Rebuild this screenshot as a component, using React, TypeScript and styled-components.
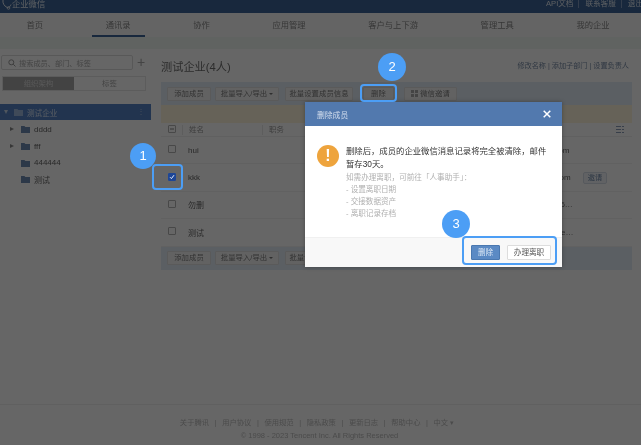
import React from "react";
import styled, { createGlobalStyle } from "styled-components";

const Global = createGlobalStyle`
  html, body { margin: 0; padding: 0; background: #fff; }
  body { font-family: "Liberation Sans", "Noto Sans CJK SC", sans-serif; }
  * { box-sizing: border-box; }
`;

const Page = styled.div`
  position: relative; width: 641px; height: 445px; overflow: hidden;
  display: flex; flex-direction: column; background: #fff; filter: blur(0.5px);
`;
const Top = styled.header`
  height: 13px; flex: none; background: #3e6598; display: flex; align-items: flex-start;
  font-size: 7.6px; line-height: 8px; color: #fff; padding-left: 2px; overflow: hidden;
`;
const Brand = styled.span`font-size: 8.3px; color: #e6edf5;`;
const TopLinks = styled.nav`
  margin-left: auto; display: flex; gap: 5px; margin-right: -2px; color: #dfe7f0;
  span + span { border-left: 1px solid #7f9abd; padding-left: 6px; }
`;
const Nav = styled.nav`
  height: 24px; flex: none; display: flex; gap: 34.6px; padding-left: 12.5px;
  background: #fbfbfb;
`;
const Tab = styled.a<{ $on?: boolean }>`
  padding: 0 14px; font-size: 8.3px; line-height: 24px; height: 24px; color: #888;
  border-bottom: 2px solid ${(p) => (p.$on ? "#3e6598" : "transparent")};
`;
const Strip = styled.div`height: 12px; flex: none; background: #eff8f3;`;
const Body = styled.div`flex: 1; display: flex; min-height: 0; background: #fff;`;
const Side = styled.aside`width: 152px; flex: none; padding-top: 6px;`;
const SearchRow = styled.div`display: flex; align-items: center; padding-left: 1px;`;
const Search = styled.div`
  width: 132px; height: 15px; border: 1px solid #ddd; border-radius: 2px; display: flex;
  align-items: center; gap: 3px; padding-left: 6px; font-size: 7.2px; color: #aaa;
`;
const Plus = styled.span`margin-left: 4px; font-size: 14px; line-height: 13px; color: #aaa;`;
const Switch = styled.div`
  margin: 6px 0 0 2px; width: 144px; height: 15px; border: 1px solid #e6e6e6; display: flex;
  font-size: 7.4px; line-height: 13px; text-align: center; color: #aaa;
`;
const SwitchItem = styled.span<{ $on?: boolean }>`
  flex: 1; background: ${(p) => (p.$on ? "#a9a9a9" : "#fff")}; color: ${(p) => (p.$on ? "#ddd" : "#aaa")};
`;
const Tree = styled.div`margin-top: 13px;`;
const Selected = styled.div`
  height: 16px; background: #5583c6; display: flex; align-items: center; padding: 0 6px 0 4px;
  gap: 4px; color: #dbe6f5; font-size: 7.6px; margin-bottom: 1px; width: 151px;
`;
const Node = styled.div`
  height: 16.7px; display: flex; align-items: center; padding-left: 10px; gap: 4px;
  font-size: 8px; color: #666;
`;
const Caret = styled.span<{ $hidden?: boolean; $down?: boolean }>`
  width: 0; height: 0; flex: none; visibility: ${(p) => (p.$hidden ? "hidden" : "visible")};
  border-style: solid;
  ${(p) => p.$down
    ? "border-width: 4px 2.5px 0 2.5px; border-color: #c5d6ec transparent transparent transparent; margin-right: 2px;"
    : "border-width: 2.5px 0 2.5px 4px; border-color: transparent transparent transparent #8a8a8a; margin: 0 3px 0 0;"}
`;
const Dots = styled.span`margin-left: auto; font-size: 8px; color: #a8bedc; line-height: 8px;`;
const Main = styled.main`width: 471px; margin-left: 9px; flex: none; display: flex; flex-direction: column;`;
const Head = styled.div`height: 33px; display: flex; align-items: flex-start; justify-content: space-between; padding-top: 11px;`;
const Title = styled.h1`margin: 0; font-size: 11.2px; line-height: 14px; font-weight: 400; color: #6f6f6f;`;
const HeadLinks = styled.div`font-size: 7.15px; line-height: 10px; color: #7b8ea8; margin: 1px 3px 0 0;`;
const Bar = styled.div`
  height: 23px; background: #e4eef7; display: flex; align-items: center; gap: 4px; padding-left: 6px; flex: none;
`;
const Btn = styled.button<{ $w: number; $mr?: number }>`
  width: ${(p) => p.$w}px; margin-right: ${(p) => p.$mr ?? 0}px; height: 14px; padding: 0; background: #f6f6f6;
  border: 1px solid #e2e2e2; border-radius: 1px; font: 7.4px/12px "Liberation Sans", "Noto Sans CJK SC", sans-serif;
  color: #7d7d7d; display: flex; align-items: center; justify-content: center; gap: 2px;
`;
const Arrow = styled.i`
  width: 0; height: 0; border-style: solid; border-width: 2.5px 2px 0 2px;
  border-color: #777 transparent transparent transparent;
`;
const Notice = styled.div`height: 18px; flex: none; background: #fff4dc;`;
const HeaderRow = styled.div`
  height: 14px; display: grid; grid-template-columns: 21px 80px 242px 70px 1fr; align-items: center;
  font-size: 7.4px; color: #999; border-bottom: 1px solid #f0f0f0; flex: none;
`;
const HeadCell = styled.span<{ $line?: boolean }>`
  padding-left: 6px; line-height: 10px; border-left: ${(p) => (p.$line ? "1px solid #e8e8e8" : "none")};
`;
const Row = styled.div`
  height: 27.4px; display: grid; grid-template-columns: 21px 80px 239px 75px 1fr; align-items: center;
  font-size: 8px; color: #666; border-bottom: 1px solid #f3f3f3; flex: none;
`;
const Cell = styled.span`padding-left: 6px; overflow: hidden; white-space: nowrap; text-overflow: ellipsis;`;
const Box = styled.span<{ $on?: boolean }>`
  width: 8px; height: 8px; margin-left: 7px; border-radius: 1px; display: flex; align-items: center; justify-content: center;
  border: 1px solid ${(p) => (p.$on ? "#1e4696" : "#b5b5b5")}; background: ${(p) => (p.$on ? "#1e4696" : "#fff")};
  position: relative; top: -1px; z-index: ${(p) => (p.$on ? 1 : "auto")};
`;
const Invite = styled.button`
  width: 24px; height: 12px; padding: 0; margin-left: 7px; background: #f3f6fa; border: 1px solid #d8dfe8; border-radius: 2px;
  font: 7.2px/10px "Liberation Sans", "Noto Sans CJK SC", sans-serif; color: #6e87a8; display: block;
`;
const ColIcon = styled.span`display: flex; justify-content: flex-end; padding-right: 8px;`;
const Foot = styled.footer`
  height: 41px; flex: none; border-top: 1px solid #f0f0f0; text-align: center; padding-top: 11px;
  font-size: 7.3px; line-height: 13px; color: #bbb; background: #fff;
`;
const FootLinks = styled.div`display: flex; justify-content: center; gap: 5.6px; padding-right: 7px;`;
const Copy = styled.div`font-size: 7.5px; padding-right: 2px;`;
const Backdrop = styled.div`position: absolute; inset: 0; background: rgba(0,0,0,.6);`;
const Modal = styled.section`
  position: absolute; left: 305px; top: 102px; width: 257px; height: 165px; background: #fff; z-index: 2;
  display: flex; flex-direction: column; box-shadow: 0 0 4px rgba(0,0,0,.3);
`;
const ModalHead = styled.div`
  height: 24px; flex: none; background: #5279ae; display: flex; align-items: center; justify-content: space-between;
  padding: 0 11px 0 12px; font-size: 7.8px; color: #d5dfee;
`;
const ModalBody = styled.div`flex: 1; display: flex; gap: 7px; padding: 19px 12px 0 12px; min-height: 0;`;
const Warn = styled.span`
  width: 22px; height: 22px; flex: none; border-radius: 50%; background: #eea43d; color: #fff;
  font-size: 16px; line-height: 22px; font-weight: 700; text-align: center;
`;
const Lead = styled.p`margin: 0; font-size: 8.35px; line-height: 12.6px; color: #333; width: 204px;`;
const Hint = styled.div`margin-top: 2px; font-size: 7.6px; line-height: 12px; color: #b0b0b0;`;
const ModalFoot = styled.div`
  height: 30px; flex: none; background: #f8f8f8; border-top: 1px solid #f0f0f0; display: flex; align-items: center;
  justify-content: flex-end; gap: 7px; padding: 0 11px 0 0;
`;
const Primary = styled.button`
  width: 29px; height: 15px; padding: 0; border: 1px solid #4a78b0; border-radius: 1px; background: #5b8ac4; color: #dce8f5;
  font: 7.6px/13px "Liberation Sans", "Noto Sans CJK SC", sans-serif;
`;
const Secondary = styled.button`
  width: 44px; height: 15px; padding: 0; border: 1px solid #ddd; border-radius: 1px; background: #fff; color: #555;
  font: 7.6px/13px "Liberation Sans", "Noto Sans CJK SC", sans-serif;
`;
const Badge = styled.span<{ $x: number; $y: number; $r: number }>`
  position: absolute; z-index: 3; left: ${(p) => p.$x - p.$r}px; top: ${(p) => p.$y - p.$r}px;
  width: ${(p) => p.$r * 2}px; height: ${(p) => p.$r * 2}px; border-radius: 50%;
  background: #4c9ef5; color: #fff; text-align: center; font-size: 13px; line-height: ${(p) => p.$r * 2}px;
`;
const Mark = styled.span<{ $x: number; $y: number; $w: number; $h: number }>`
  position: absolute; z-index: 3; left: ${(p) => p.$x}px; top: ${(p) => p.$y}px; width: ${(p) => p.$w}px; height: ${(p) => p.$h}px;
  border: 2px solid #4c9ef5; border-radius: 4px;
`;

const Folder = ({ c }: { c: string }) => (
  <svg width="9" height="8" viewBox="0 0 9 8" style={{ flex: "none" }}>
    <path d="M0 1h3.4l1 1H9v6H0z" fill={c} />
  </svg>
);

const Toolbar = () => (
  <>
    <Btn $w={44}>添加成员</Btn>
    <Btn $w={64} $mr={2}>批量导入/导出 <Arrow /></Btn>
    <Btn $w={68} $mr={6}>批量设置成员信息</Btn>
    <Btn $w={31} $mr={6}>删除</Btn>
    <Btn $w={53}>
      <svg width="7" height="7" viewBox="0 0 7 7"><path d="M0 0h3v3H0zM4 0h3v3H4zM0 4h3v3H0zM4 4h3v3H4z" fill="#aaa" /></svg>
      微信邀请
    </Btn>
  </>
);

export default function App() {
  return (
    <Page>
      <Global />
      <Top>
        <svg width="10" height="10" viewBox="0 0 10 10" style={{ flex: "none" }}>
          <path d="M1 0c-.5 3 1 6 4 7.4M9 4.500c-.6 2-2 3-4 3" stroke="#dfe7f0" strokeWidth="1" fill="none" />
          <circle cx="6.500" cy="8" r="1.300" fill="none" stroke="#dfe7f0" strokeWidth=".8" />
        </svg>
        <Brand>企业微信</Brand>
        <TopLinks>
          <span>API文档</span>
          <span>联系客服</span>
          <span>退出</span>
        </TopLinks>
      </Top>
      <Nav>
        <Tab>首页</Tab>
        <Tab $on>通讯录</Tab>
        <Tab>协作</Tab>
        <Tab>应用管理</Tab>
        <Tab>客户与上下游</Tab>
        <Tab>管理工具</Tab>
        <Tab>我的企业</Tab>
      </Nav>
      <Strip />
      <Body>
        <Side>
          <SearchRow>
            <Search>
              <svg width="8" height="8" viewBox="0 0 8 8"><circle cx="3.300" cy="3.300" r="2.500" fill="none" stroke="#999" strokeWidth="1" /><path d="M5.200 5.200L7.500 7.500" stroke="#999" strokeWidth="1" /></svg>
              搜索成员、部门、标签
            </Search>
            <Plus>+</Plus>
          </SearchRow>
          <Switch>
            <SwitchItem $on>组织架构</SwitchItem>
            <SwitchItem>标签</SwitchItem>
          </Switch>
          <Tree>
            <Selected>
              <Caret $down />
              <Folder c="#9db8de" />
              测试企业
              <Dots>⋮</Dots>
            </Selected>
            {[["dddd", true], ["fff", true], ["444444", false], ["测试", false]].map(([n, c]) => (
              <Node key={n as string}>
                <Caret $hidden={!c} />
                <Folder c="#6f8cb4" />
                {n}
              </Node>
            ))}
          </Tree>
        </Side>
        <Main>
          <Head>
            <Title>测试企业(4人)</Title>
            <HeadLinks>修改名称 | 添加子部门 | 设置负责人</HeadLinks>
          </Head>
          <Bar><Toolbar /></Bar>
          <Notice />
          <HeaderRow>
            <Box>
              <svg width="6" height="6" viewBox="0 0 6 6"><path d="M1 3h4" stroke="#888" strokeWidth="1" /></svg>
            </Box>
            <HeadCell $line>姓名</HeadCell>
            <HeadCell $line>职务</HeadCell>
            <span />
            <ColIcon>
              <svg width="8" height="7" viewBox="0 0 8 7"><path d="M0 .5h5M0 3.500h5M0 6.500h5M6 .5h2M6 3.500h2M6 6.500h2" stroke="#8d9fb8" strokeWidth="1" /></svg>
            </ColIcon>
          </HeaderRow>
          <Row><Box /><Cell>hui</Cell><span /><Cell>hui@tencent.com</Cell><span /></Row>
          <Row>
            <Box $on>
              <svg width="6" height="6" viewBox="0 0 6 6"><path d="M1 3.200l1.400 1.400L5 1.200" stroke="#e8eefa" strokeWidth="1" fill="none" /></svg>
            </Box>
            <Cell>kkk</Cell><span /><Cell>kkk@tencent.com</Cell><Invite>邀请</Invite>
          </Row>
          <Row><Box /><Cell>勿删</Cell><span /><Cell>1380013888866666</Cell><span /></Row>
          <Row><Box /><Cell>测试</Cell><span /><Cell>test-account@tencent.com</Cell><span /></Row>
          <Bar><Toolbar /></Bar>
        </Main>
      </Body>
      <Foot>
        <FootLinks>
          <span>关于腾讯</span><span>|</span><span>用户协议</span><span>|</span><span>使用规范</span><span>|</span>
          <span>隐私政策</span><span>|</span><span>更新日志</span><span>|</span><span>帮助中心</span><span>|</span><span>中文 ▾</span>
        </FootLinks>
        <Copy>© 1998 - 2023 Tencent Inc. All Rights Reserved</Copy>
      </Foot>
      <Backdrop />
      <Modal>
        <ModalHead>
          删除成员
          <svg width="8" height="8" viewBox="0 0 8 8"><path d="M.7.7l6.600 6.600M7.300.7L.7 7.300" stroke="#fff" strokeWidth="1.500" /></svg>
        </ModalHead>
        <ModalBody>
          <Warn>!</Warn>
          <div>
            <Lead>删除后，成员的企业微信消息记录将完全被清除，邮件暂存30天。</Lead>
            <Hint>
              如需办理离职，可前往「人事助手」：
              <div>- 设置离职日期</div>
              <div>- 交接数据资产</div>
              <div>- 离职记录存档</div>
            </Hint>
          </div>
        </ModalBody>
        <ModalFoot>
          <Primary>删除</Primary>
          <Secondary>办理离职</Secondary>
        </ModalFoot>
      </Modal>
      <Mark $x={152} $y={164} $w={31} $h={26} />
      <Mark $x={360} $y={84} $w={37} $h={18} />
      <Mark $x={462} $y={236} $w={95} $h={29} />
      <Badge $x={143} $y={156} $r={13}>1</Badge>
      <Badge $x={392} $y={67} $r={14}>2</Badge>
      <Badge $x={456} $y={224} $r={14}>3</Badge>
    </Page>
  );
}
